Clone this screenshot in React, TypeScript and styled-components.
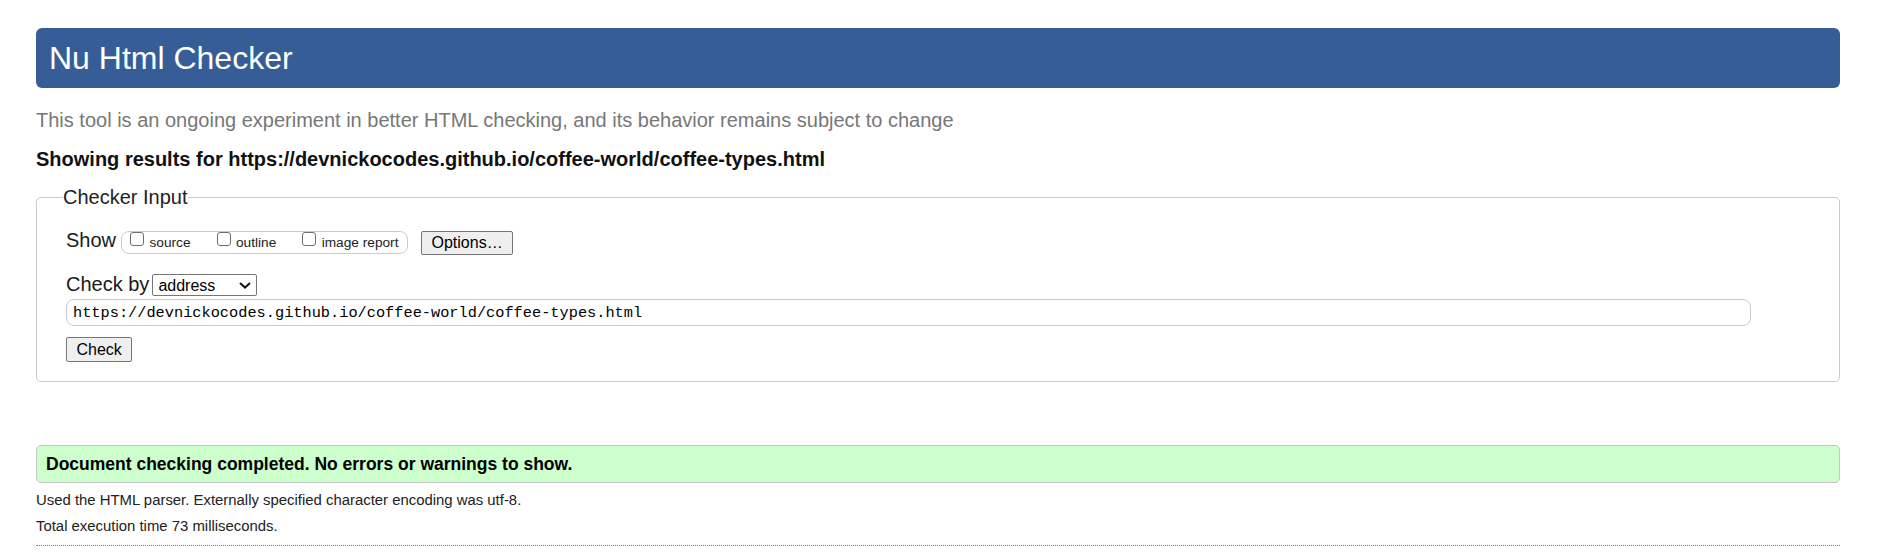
import React from "react";
import styled, { createGlobalStyle } from "styled-components";

const GlobalStyle = createGlobalStyle`
  html, body { margin: 0; padding: 0; background: #fff; }
  body { font-family: "Liberation Sans", Arial, sans-serif; color: #222; }
`;

const Page = styled.div`
  padding: 28px 38px 0 36px;
`;

const Banner = styled.h1`
  margin: 0;
  height: 60px;
  box-sizing: border-box;
  padding: 0 13px;
  display: flex;
  align-items: center;
  background: #365d95;
  color: #fff;
  font-size: 32px;
  font-weight: normal;
  line-height: 37px;
  border-radius: 6px;
`;

const Tagline = styled.p`
  margin: 21px 0 0;
  font-size: 20px;
  line-height: 23px;
  color: #777;
`;

const ResultsFor = styled.p`
  margin: 16.4px 0 0;
  font-size: 20px;
  line-height: 23px;
  font-weight: bold;
  color: #111;
`;

const InputSet = styled.fieldset`
  margin: 14.6px 0 0;
  padding: 22px 29px 19px;
  border: 1px solid #ccc;
  border-radius: 5px;
  min-width: 0;
`;

const SetTitle = styled.legend`
  margin-left: -3px;
  padding: 0;
  font-size: 20px;
  line-height: 23px;
  color: #222;
`;

const Row = styled.div<{ $h: number; $mt?: number }>`
  display: flex;
  align-items: center;
  height: ${(p) => p.$h}px;
  margin-top: ${(p) => p.$mt ?? 0}px;
`;

const RowLabel = styled.span<{ $lift: number; $gap: number }>`
  font-size: 20px;
  line-height: 23px;
  margin-right: ${(p) => p.$gap}px;
  margin-bottom: ${(p) => p.$lift}px;
  color: #1a1a1a;
`;

const ShowGroup = styled.span`
  display: flex;
  align-items: flex-start;
  gap: 26px;
  height: 23px;
  box-sizing: border-box;
  padding: 0 9px 0 8px;
  border: 1px solid #ccc;
  border-radius: 8px;
`;

const CheckItem = styled.label`
  display: flex;
  align-items: flex-start;
  gap: 5.4px;
`;

const Box = styled.input`
  appearance: none;
  -webkit-appearance: none;
  margin: 0;
  width: 14px;
  height: 14px;
  box-sizing: border-box;
  border: 1px solid #6f6f6f;
  border-radius: 3px;
  background: #fff;
`;

const CheckText = styled.span`
  margin-top: 2.1px;
  font-size: 13.7px;
  line-height: 15px;
  color: #222;
`;

const PlainButton = styled.button<{ $h: number; $ml?: number }>`
  height: ${(p) => p.$h}px;
  margin-left: ${(p) => p.$ml ?? 0}px;
  box-sizing: border-box;
  padding: 0 9.5px;
  background: #efefef;
  border: 1px solid #767676;
  border-radius: 2px;
  font-family: "Liberation Sans", Arial, sans-serif;
  font-size: 16px;
  line-height: 18px;
  color: #000;
`;

const SelectWrap = styled.span`
  position: relative;
  display: inline-flex;
`;

const Select = styled.select`
  appearance: none;
  -webkit-appearance: none;
  width: 104.5px;
  height: 22px;
  box-sizing: border-box;
  margin: 0;
  padding: 0 0 0 5px;
  border: 1px solid #767676;
  border-radius: 2px;
  background: #fff;
  font-family: "Liberation Sans", Arial, sans-serif;
  font-size: 16px;
  color: #000;
`;

const Chevron = styled.svg`
  position: absolute;
  right: 5.5px;
  top: 7.5px;
  pointer-events: none;
`;

const UrlField = styled.input`
  display: block;
  width: calc(100% - 59px);
  height: 27.5px;
  box-sizing: border-box;
  margin: 2px 0 0;
  padding: 0 6px;
  border: 1px solid #ccc;
  border-radius: 8px;
  font-family: "Liberation Mono", "Courier New", monospace;
  font-size: 15.3px;
  color: #000;
  background: #fff;
`;

const SubmitRow = styled.div`
  margin-top: 10.5px;
  display: flex;
`;

const Success = styled.div`
  margin-top: 63px;
  height: 37.2px;
  box-sizing: border-box;
  display: flex;
  align-items: center;
  padding: 0 9px;
  background: #ccffcc;
  border: 1px solid #c6c6c6;
  border-radius: 5px;
  font-size: 17.5px;
  font-weight: bold;
  color: #000;
`;

const Note = styled.p<{ $mt: number }>`
  margin: ${(p) => p.$mt}px 0 0;
  font-size: 14.9px;
  line-height: 17px;
  color: #222;
`;

const Rule = styled.hr`
  margin: 10px 0 0;
  height: 0;
  border: 0;
  border-top: 1px dotted #777;
`;

export default function App() {
  const url = "https://devnickocodes.github.io/coffee-world/coffee-types.html";
  return (
    <>
      <GlobalStyle />
      <Page>
        <Banner>Nu Html Checker</Banner>
        <Tagline>
          This tool is an ongoing experiment in better HTML checking, and its behavior remains subject to change
        </Tagline>
        <ResultsFor>Showing results for {url}</ResultsFor>
        <InputSet>
          <SetTitle>Checker Input</SetTitle>
          <Row $h={24}>
            <RowLabel $lift={4} $gap={5}>Show</RowLabel>
            <ShowGroup>
              <CheckItem>
                <Box type="checkbox" />
                <CheckText>source</CheckText>
              </CheckItem>
              <CheckItem>
                <Box type="checkbox" />
                <CheckText>outline</CheckText>
              </CheckItem>
              <CheckItem>
                <Box type="checkbox" />
                <CheckText>image report</CheckText>
              </CheckItem>
            </ShowGroup>
            <PlainButton type="button" $h={24} $ml={12.5}>
              Options…
            </PlainButton>
          </Row>
          <Row $h={23} $mt={19}>
            <RowLabel $lift={2.4} $gap={3}>Check by</RowLabel>
            <SelectWrap>
              <Select defaultValue="address">
                <option value="address">address</option>
                <option value="file">file upload</option>
                <option value="text">text input</option>
              </Select>
              <Chevron width="12" height="7" viewBox="0 0 12 7">
                <polyline points="1,1 6,5.6 11,1" fill="none" stroke="#111" strokeWidth="2" />
              </Chevron>
            </SelectWrap>
          </Row>
          <UrlField type="url" defaultValue={url} />
          <SubmitRow>
            <PlainButton type="submit" $h={25.5}>
              Check
            </PlainButton>
          </SubmitRow>
        </InputSet>
        <Success>Document checking completed. No errors or warnings to show.</Success>
        <Note $mt={9.5}>Used the HTML parser. Externally specified character encoding was utf-8.</Note>
        <Note $mt={8.5}>Total execution time 73 milliseconds.</Note>
        <Rule />
      </Page>
    </>
  );
}
